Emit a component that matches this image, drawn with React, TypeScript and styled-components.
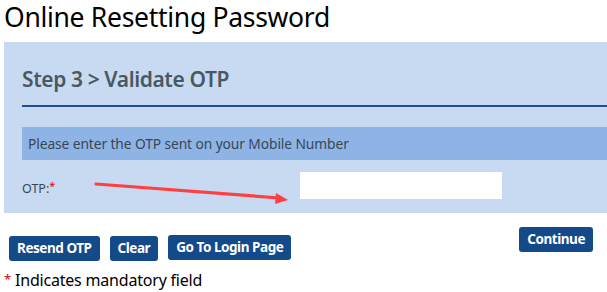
import React from "react";
import styled, { createGlobalStyle } from "styled-components";

const Global = createGlobalStyle`
  html, body { margin: 0; padding: 0; background: #fff; overflow: hidden; }
  body { font-family: "Noto Sans", "DejaVu Sans", sans-serif; }
`;

const Page = styled.div`
  width: 607px;
  height: 292px;
  overflow: hidden;
  position: relative;
`;

const Title = styled.h1`
  margin: 0;
  padding: 0 0 0 4px;
  height: 42px;
  font-size: 26.5px;
  line-height: 34px;
  font-weight: 400;
  color: #000;
  letter-spacing: -0.3px;
  white-space: nowrap;
`;

const Panel = styled.div`
  margin-left: 4px;
  width: 640px;
  height: 171px;
  background: #c8d9f2;
  padding: 22px 0 0 18px;
  box-sizing: border-box;
`;

const StepHeading = styled.h2`
  margin: 0;
  height: 41px;
  border-bottom: 2px solid #24508a;
  font-size: 21px;
  line-height: 30px;
  font-weight: 600;
  color: #4a5961;
  letter-spacing: -0.4px;
`;

const InfoBar = styled.div`
  margin-top: 20px;
  height: 33px;
  background: #8eb4e6;
  padding-left: 6px;
  font-size: 13.8px;
  line-height: 33px;
  color: #3a4654;
  letter-spacing: -0.1px;
`;

const FieldRow = styled.div`
  position: relative;
  display: flex;
  align-items: flex-start;
  height: 54px;
`;

const Label = styled.label`
  margin-top: 18px;
  width: 278px;
  font-size: 12.5px;
  color: #3a4654;
`;

const Req = styled.span`
  color: #e00000;
  font-size: 11px;
  vertical-align: 3px;
`;

const Input = styled.input`
  margin-top: 12px;
  width: 202px;
  height: 27px;
  border: none;
  background: #fff;
  padding: 0;
  outline: none;
`;

const ArrowSvg = styled.svg`
  position: absolute;
  left: 70px;
  top: 12px;
`;

const Actions = styled.div`
  display: flex;
  align-items: flex-start;
  padding: 0 14px 0 9px;
`;

const Button = styled.button<{ $top: number }>`
  margin-top: ${(p) => p.$top}px;
  margin-right: 10px;
  height: 25px;
  padding: 0 8px;
  background: #154a8a;
  color: #fff;
  border: none;
  border-radius: 3px;
  font-family: "Noto Sans", "DejaVu Sans", sans-serif;
  font-size: 13.5px;
  font-weight: 700;
  letter-spacing: -0.45px;
  line-height: 25px;
  cursor: pointer;
  &:last-child { margin-right: 0; }
`;

const Spacer = styled.div`
  flex: 1;
`;

const Note = styled.div`
  margin: 8px 0 0 4px;
  font-size: 16px;
  color: #000;
  letter-spacing: -0.2px;
`;

const Star = styled.span`
  color: #e00000;
  font-size: 13px;
  margin-right: 4px;
  vertical-align: 2px;
`;

export default function App() {
  return (
    <Page>
      <Global />
      <Title>Online Resetting Password</Title>
      <Panel>
        <StepHeading>Step 3 &gt; Validate OTP</StepHeading>
        <InfoBar>Please enter the OTP sent on your Mobile Number</InfoBar>
        <FieldRow>
          <Label>
            OTP:<Req>*</Req>
          </Label>
          <Input type="text" aria-label="OTP" />
          <ArrowSvg width="210" height="34" viewBox="0 0 210 34">
            <line x1="4" y1="12" x2="188" y2="26" stroke="#ff4040" strokeWidth="3.2" strokeLinecap="round" />
            <polygon points="196,28 184,21 183,32" fill="#ff4040" />
          </ArrowSvg>
        </FieldRow>
      </Panel>
      <Actions>
        <Button $top={23}>Resend OTP</Button>
        <Button $top={23}>Clear</Button>
        <Button $top={22}>Go To Login Page</Button>
        <Spacer />
        <Button $top={14}>Continue</Button>
      </Actions>
      <Note>
        <Star>*</Star>Indicates mandatory field
      </Note>
    </Page>
  );
}
